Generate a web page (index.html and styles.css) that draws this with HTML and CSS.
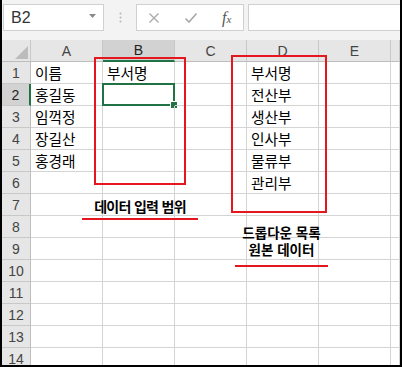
FILE: index.html
```html
<!DOCTYPE html>
<html lang="ko">

<head>
    <meta charset="UTF-8">
    <meta name="viewport" content="width=device-width, initial-scale=1.0">
    <title>데이터 유효성 검사</title>
    <link rel="stylesheet" href="styles.css">
</head>

<body>
    <div class="window">
        <div class="formula-bar">
            <div class="name-box">
                <span>B2</span>
                <svg class="caret" width="7" height="4" viewBox="0 0 7 4"><polygon points="0,0 7,0 3.5,4" fill="#8a8a8a"/></svg>
            </div>
            <div class="grip">
                <svg width="3" height="11" viewBox="0 0 3 11"><circle cx="1.5" cy="1.5" r="1" fill="#b5b5b5"/><circle cx="1.5" cy="5.5" r="1" fill="#b5b5b5"/><circle cx="1.5" cy="9.5" r="1" fill="#b5b5b5"/></svg>
            </div>
            <div class="fx-buttons">
                <svg width="12" height="12" viewBox="0 0 12 12"><path d="M1.5 1.5 L10.5 10.5 M10.5 1.5 L1.5 10.5" stroke="#a8a8a8" stroke-width="1.3"/></svg>
                <svg width="14" height="12" viewBox="0 0 14 12"><path d="M1.5 6.5 L5 10 L12.5 1.5" stroke="#a8a8a8" stroke-width="1.6" fill="none"/></svg>
                <span class="fx">f<i>x</i></span>
            </div>
            <div class="formula-input"></div>
        </div>

        <div class="sheet">
            <div class="corner">
                <svg width="13" height="13" viewBox="0 0 13 13"><polygon points="13,0 13,13 0,13" fill="#bcbcbc"/></svg>
            </div>
            <div class="col-head">A</div>
            <div class="col-head active">B</div>
            <div class="col-head">C</div>
            <div class="col-head">D</div>
            <div class="col-head">E</div>
            <div class="col-head"></div>

            <div class="row-head">1</div>
            <div class="cell">이름</div><div class="cell">부서명</div><div class="cell"></div><div class="cell">부서명</div><div class="cell"></div><div class="cell"></div>

            <div class="row-head active">2</div>
            <div class="cell">홍길동</div><div class="cell selected"><span class="handle"></span></div><div class="cell"></div><div class="cell">전산부</div><div class="cell"></div><div class="cell"></div>

            <div class="row-head">3</div>
            <div class="cell">임꺽정</div><div class="cell"></div><div class="cell"></div><div class="cell">생산부</div><div class="cell"></div><div class="cell"></div>

            <div class="row-head">4</div>
            <div class="cell">장길산</div><div class="cell"></div><div class="cell"></div><div class="cell">인사부</div><div class="cell"></div><div class="cell"></div>

            <div class="row-head">5</div>
            <div class="cell">홍경래</div><div class="cell"></div><div class="cell"></div><div class="cell">물류부</div><div class="cell"></div><div class="cell"></div>

            <div class="row-head">6</div>
            <div class="cell"></div><div class="cell"></div><div class="cell"></div><div class="cell">관리부</div><div class="cell"></div><div class="cell"></div>

            <div class="row-head">7</div>
            <div class="cell"></div><div class="cell"></div><div class="cell"></div><div class="cell"></div><div class="cell"></div><div class="cell"></div>

            <div class="row-head">8</div>
            <div class="cell"></div><div class="cell"></div><div class="cell"></div><div class="cell"></div><div class="cell"></div><div class="cell"></div>

            <div class="row-head">9</div>
            <div class="cell"></div><div class="cell"></div><div class="cell"></div><div class="cell"></div><div class="cell"></div><div class="cell"></div>

            <div class="row-head">10</div>
            <div class="cell"></div><div class="cell"></div><div class="cell"></div><div class="cell"></div><div class="cell"></div><div class="cell"></div>

            <div class="row-head">11</div>
            <div class="cell"></div><div class="cell"></div><div class="cell"></div><div class="cell"></div><div class="cell"></div><div class="cell"></div>

            <div class="row-head">12</div>
            <div class="cell"></div><div class="cell"></div><div class="cell"></div><div class="cell"></div><div class="cell"></div><div class="cell"></div>

            <div class="row-head">13</div>
            <div class="cell"></div><div class="cell"></div><div class="cell"></div><div class="cell"></div><div class="cell"></div><div class="cell"></div>

            <div class="row-head">14</div>
            <div class="cell"></div><div class="cell"></div><div class="cell"></div><div class="cell"></div><div class="cell"></div><div class="cell"></div>
        </div>

        <!-- red frames and captions drawn over the sheet -->
        <div class="mark mark-input"></div>
        <div class="mark mark-source"></div>
        <div class="note note-input">데이터 입력 범위</div>
        <div class="note note-source">
            <div class="note-line">드롭다운 목록</div>
            <div class="note-line">원본 데이터</div>
        </div>
    </div>
</body>

</html>
```

FILE: styles.css
```css
body {
    margin: 0;
    background: #fff;
    font-family: 'Noto Sans CJK KR', sans-serif;
}

.window {
    position: relative;
    width: 402px;
    height: 367px;
    box-sizing: border-box;
    border-left: 2px solid #000;
    border-right: 2px solid #000;
    border-bottom: 2px solid #000;
    overflow: hidden;
    background: #f3f3f3;
}

/* formula bar */
.formula-bar {
    display: flex;
    height: 40px;
    box-sizing: border-box;
    padding: 4px 0 0 1px;
    align-items: flex-start;
}

.name-box {
    width: 101px;
    height: 27px;
    box-sizing: border-box;
    border: 1px solid #d0d0d0;
    background: #fff;
    display: flex;
    align-items: center;
    justify-content: space-between;
    padding: 0 7px 0 7px;
    font-family: 'Liberation Sans', sans-serif;
    font-size: 16px;
    color: #333;
}

.caret {
    margin-top: -3px;
}

.grip {
    width: 32px;
    height: 27px;
    display: flex;
    align-items: center;
    justify-content: center;
}

.fx-buttons {
    width: 108px;
    height: 27px;
    box-sizing: border-box;
    border: 1px solid #d0d0d0;
    background: #fff;
    display: flex;
    align-items: center;
    padding-left: 11px;
    gap: 24px;
}

.fx {
    font-family: 'Liberation Serif', serif;
    font-style: italic;
    font-size: 16px;
    color: #555;
}

.fx i {
    font-size: 11px;
}

.formula-input {
    flex: 1;
    height: 27px;
    margin-left: 4px;
    margin-right: -2px;
    box-sizing: border-box;
    border: 1px solid #d0d0d0;
    background: #fff;
}

/* sheet grid */
.sheet {
    display: grid;
    grid-template-columns: 29px repeat(5, 72px) 1fr;
    grid-auto-rows: 22px;
    background: #fff;
}

.corner,
.col-head,
.row-head {
    background: #e6e6e6;
    box-sizing: border-box;
    color: #444;
    font-family: 'Liberation Sans', sans-serif;
    font-size: 14px;
    display: flex;
    align-items: center;
    justify-content: center;
}

.corner {
    border-right: 1px solid #c8c8c8;
    border-bottom: 1px solid #bdbdbd;
    align-items: flex-end;
    justify-content: flex-end;
    padding: 0 2px 2px 0;
}

.col-head {
    border-right: 1px solid #c8c8c8;
    border-bottom: 1px solid #bdbdbd;
}

.col-head.active {
    background: #d2d2d2;
    border-bottom: 2px solid #217346;
    color: #222;
}

.row-head {
    border-right: 1px solid #bdbdbd;
    border-bottom: 1px solid #c8c8c8;
}

.row-head.active {
    background: #d2d2d2;
    border-right: 2px solid #217346;
    color: #222;
}

.cell {
    position: relative;
    box-sizing: border-box;
    border-right: 1px solid #d4d4d4;
    border-bottom: 1px solid #d4d4d4;
    padding-left: 4px;
    font-size: 14.7px;
    line-height: 21px;
    color: #000;
    white-space: nowrap;
}

.cell.selected {
    border: 2px solid #217346;
    margin: -1px 0 0 -1px;
    width: calc(100% + 1px);
    height: 23px;
}

.handle {
    position: absolute;
    right: -5px;
    bottom: -5px;
    width: 6px;
    height: 6px;
    background: #217346;
    border: 1px solid #fff;
}

/* red frames and captions */
.mark {
    position: absolute;
    box-sizing: border-box;
    border: 2px solid #e4171e;
}

.mark-input {
    left: 92px;
    top: 57px;
    width: 92px;
    height: 128px;
}

.mark-source {
    left: 229px;
    top: 55px;
    width: 96px;
    height: 158px;
}

.note {
    position: absolute;
    font-weight: 700;
    color: #000;
    text-align: center;
    white-space: nowrap;
    border-bottom: 2px solid #e4171e;
}

.note-input {
    left: 80px;
    top: 198px;
    width: 116px;
    font-size: 14px;
    letter-spacing: -0.7px;
    line-height: 16px;
    padding-bottom: 4px;
}

.note-source {
    left: 233px;
    top: 225px;
    width: 93px;
    font-size: 13.5px;
    padding-bottom: 6px;
}

.note-line {
    height: 17px;
    line-height: 15px;
    overflow: visible;
}
```
